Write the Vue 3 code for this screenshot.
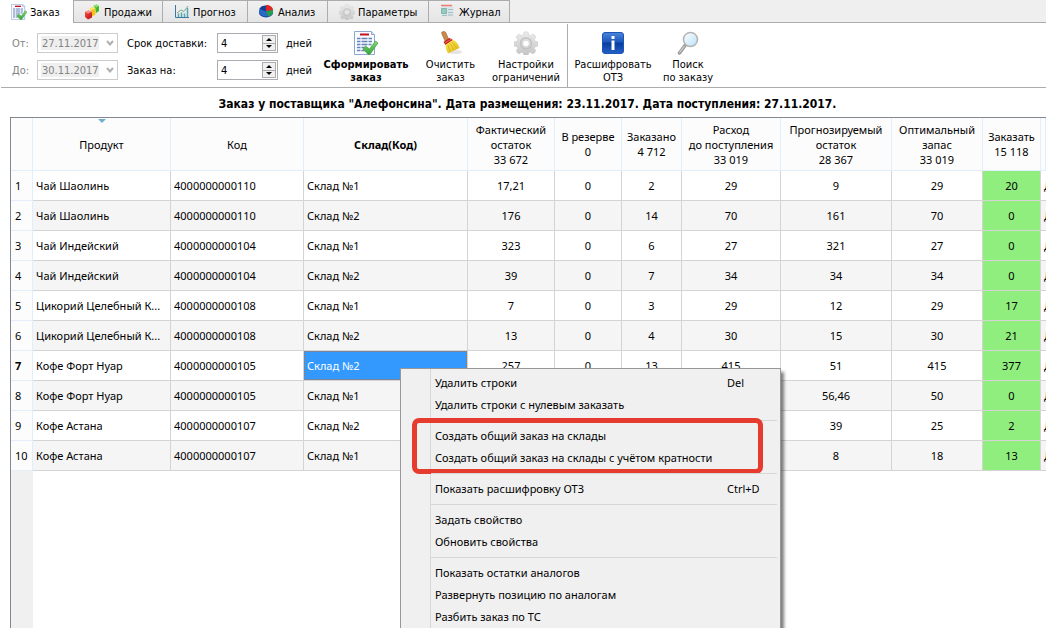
<script setup>
const tabs = [
  { id: 'order', label: 'Заказ', w: 'w1' },
  { id: 'sales', label: 'Продажи', w: 'w2' },
  { id: 'forecast', label: 'Прогноз', w: 'w3' },
  { id: 'analysis', label: 'Анализ', w: 'w4' },
  { id: 'params', label: 'Параметры', w: 'w5' },
  { id: 'journal', label: 'Журнал', w: 'w6' },
]
const columns = [
  { lines: ['Продукт'], sort: true },
  { lines: ['Код'] },
  { lines: ['Склад(Код)'], bold: true },
  { lines: ['Фактический', 'остаток', '33 672'] },
  { lines: ['В резерве', '0'] },
  { lines: ['Заказано', '4 712'] },
  { lines: ['Расход', 'до поступления', '33 019'] },
  { lines: ['Прогнозируемый', 'остаток', '28 367'] },
  { lines: ['Оптимальный', 'запас', '33 019'] },
  { lines: ['Заказать', '15 118'] },
]
const rows = [
  ['Чай Шаолинь', '4000000000110', 'Склад №1', '17,21', '0', '2', '29', '9', '29', '20'],
  ['Чай Шаолинь', '4000000000110', 'Склад №2', '176', '0', '14', '70', '161', '70', '0'],
  ['Чай Индейский', '4000000000104', 'Склад №1', '323', '0', '6', '27', '321', '27', '0'],
  ['Чай Индейский', '4000000000104', 'Склад №2', '39', '0', '7', '34', '34', '34', '0'],
  ['Цикорий Целебный К...', '4000000000108', 'Склад №1', '7', '0', '3', '29', '12', '29', '17'],
  ['Цикорий Целебный К...', '4000000000108', 'Склад №2', '13', '0', '4', '30', '15', '30', '21'],
  ['Кофе Форт Нуар', '4000000000105', 'Склад №2', '257', '0', '13', '415', '51', '415', '377'],
  ['Кофе Форт Нуар', '4000000000105', 'Склад №1', '', '', '', '', '56,46', '50', '0'],
  ['Кофе Астана', '4000000000107', 'Склад №2', '', '', '', '', '39', '25', '2'],
  ['Кофе Астана', '4000000000107', 'Склад №1', '', '', '', '', '8', '18', '13'],
]
const menu = [
  [{ t: 'Удалить строки', k: 'Del' }, { t: 'Удалить строки с нулевым заказать' }],
  [{ t: 'Создать общий заказ на склады' }, { t: 'Создать общий заказ на склады с учётом кратности' }],
  [{ t: 'Показать расшифровку ОТЗ', k: 'Ctrl+D' }],
  [{ t: 'Задать свойство' }, { t: 'Обновить свойства' }],
  [{ t: 'Показать остатки аналогов' }, { t: 'Развернуть позицию по аналогам' }, { t: 'Разбить заказ по ТС' }],
]
</script>

<template>
  <div class="app">
    <svg class="defs" aria-hidden="true">
      <defs>
        <linearGradient id="g-red" x1="0" y1="0" x2="1" y2="1"><stop offset="0" stop-color="#f4524a" /><stop offset="1" stop-color="#b80f10" /></linearGradient>
        <linearGradient id="g-gear" x1="0" y1="0" x2="0" y2="1"><stop offset="0" stop-color="#ececec" /><stop offset="1" stop-color="#c4c4c4" /></linearGradient>
        <linearGradient id="g-blue" x1="0" y1="0" x2="0" y2="1"><stop offset="0" stop-color="#4b86d8" /><stop offset=".45" stop-color="#1d58bd" /><stop offset=".5" stop-color="#073c9f" /><stop offset="1" stop-color="#2560c8" /></linearGradient>
        <linearGradient id="g-straw" x1="0" y1="0" x2="1" y2="1"><stop offset="0" stop-color="#ffee4a" /><stop offset="1" stop-color="#dfb21c" /></linearGradient>
        <linearGradient id="g-glass" x1="0" y1="0" x2="1" y2="1"><stop offset="0" stop-color="#ffffff" /><stop offset="1" stop-color="#b9e0f8" /></linearGradient>
        <linearGradient id="g-check" x1="0" y1="0" x2="0" y2="1"><stop offset="0" stop-color="#86d873" /><stop offset="1" stop-color="#36a43c" /></linearGradient>
        <symbol id="doc" viewBox="0 0 24 24">
          <path d="M.5.5h17l3 3v20H.5z" fill="#f8fbff" stroke="#8ea9d0" />
          <path d="M17.500.5v3h3" fill="#dce8f8" stroke="#8ea9d0" />
          <path d="M6 3.500h9" stroke="#c5101c" stroke-width="2" />
          <path d="M3 7.500h3.500m1 0h6m1 0h3.500M3 10.500h3.500m1 0h6m1 0h3.500M3 13.500h3.500m1 0h6m1 0h3M3 16.500h3.500m1 0h3M3 19.500h3.500m1 0h3" stroke="#6680b8" stroke-width="1.500" />
          <path d="M9 18l2.500-3 4 3 6-8 2.500 2-8 11.300h-2z" fill="url(#g-check)" stroke="#41a245" stroke-width=".7" />
        </symbol>
        <symbol id="gear" viewBox="0 0 24 24">
          <path fill-rule="evenodd" d="M9.800 1.200q2.200-1 4.400 0l.5 2.800 1.700.7 2.400-1.600q2.300.9 3.100 3.100l-1.600 2.400.7 1.700 2.800.5q1 2.200 0 4.400l-2.800.5-.7 1.700 1.600 2.400q-.9 2.300-3.100 3.100l-2.400-1.600-1.700.7-.5 2.300q-2.200.6-4.400 0L9.300 22l-1.700-.7-2.400 1.600q-2.300-.9-3.100-3.100l1.600-2.400-.7-1.700-2.800-.5q-1-2.200 0-4.400l2.800-.5.7-1.700-1.600-2.400q.9-2.300 3.100-3.100l2.400 1.600L9.300 4zM12 9.300a3.200 3.200 0 100 6.400 3.200 3.200 0 000-6.400z" fill="url(#g-gear)" stroke="#c8c8c8" stroke-width=".5" />
          <circle cx="12" cy="12.500" r="5.500" fill="none" stroke="#c2c2c2" stroke-width="1.400" />
        </symbol>
      </defs>
    </svg>

    <nav class="tabs" role="tablist">
      <button v-for="(t, i) in tabs" :key="t.id" type="button" role="tab" :aria-selected="i === 0" :class="['tab', t.w, { active: i === 0 }]">
        <svg class="ticon" viewBox="0 0 16 16" aria-hidden="true">
          <use v-if="t.id === 'order'" href="#doc" width="16" height="16" />
          <g v-else-if="t.id === 'sales'">
            <path d="M0 8l3.500-1.500L7 8v5.500L3 15.500 0 13z" fill="url(#g-red)" />
            <path d="M4.500 4.500L8 3l2.500 1.500v6L7 12.500V8z" fill="#f0c419" /><path d="M4.500 4.500L8 3l2.500 1.500L7 6z" fill="#ffe96a" />
            <path d="M8.500 2l3-1.500L14 2v5l-3 2-.5-4.500z" fill="#44b52f" /><path d="M8.500 2l3-1.500L14 2l-3 1.500z" fill="#8ce371" />
            <path d="M0 8l3.500-1.500L7 8 3 9.500z" fill="#ff8e82" />
          </g>
          <g v-else-if="t.id === 'forecast'" fill="none">
            <path d="M1.500 1v12.500H15" stroke="#3b78a0" /><path d="M4.500 13V9.500M7.500 13V8.500M10.500 13V9.500M13.500 13V4" stroke="#55a9b4" stroke-width="1.500" /><path d="M3 9l4-3 3 1.500L14 2" stroke="#6fae92" />
          </g>
          <g v-else-if="t.id === 'analysis'">
            <ellipse cx="7" cy="8.500" rx="7" ry="5" fill="#103f91" /><ellipse cx="7" cy="7" rx="7" ry="5.500" fill="#2869c9" />
            <path d="M7 7.500L.5 5C1.500 2 5 1 7.500 2z" fill="#163e92" /><path d="M7 7V1c4-.5 6.500 2 7 5z" fill="#e02822" /><path d="M7 7.500L14 6c.5 3-2 6-4.500 6.500z" fill="#24a146" />
          </g>
          <use v-else-if="t.id === 'params'" href="#gear" width="16" height="16" />
          <g v-else>
            <path d="M1.500 1.500h12v11h-12z" fill="#dce5e7" /><path d="M1 1.500h11" stroke="#ef7a76" stroke-width="1.500" /><path d="M1.500 4.500h5v5h-5z" fill="#98cbbd" stroke="#80b5ac" /><path d="M8 5.500h5M8 8.500h5M8 11h5M2 11.500h5" stroke="#a5bcc4" />
          </g>
        </svg>
        <span>{{ t.label }}</span>
      </button>
    </nav>

    <header class="toolbar">
      <form class="fields" @submit.prevent>
        <label class="dim" for="from">От:</label>
        <div class="pick">
          <select id="from" class="date" disabled><option>27.11.2017</option></select>
          <svg class="chev" viewBox="0 0 8 6" aria-hidden="true"><path d="M1 1l3 3.500L7 1" /></svg>
        </div>
        <label for="term">Срок доставки:</label>
        <div class="spin"><input id="term" type="text" value="4"><span class="arrows"><button type="button" aria-label="Больше"><i class="up"></i></button><button type="button" aria-label="Меньше"><i class="down"></i></button></span></div>
        <span>дней</span>
        <label class="dim" for="to">До:</label>
        <div class="pick">
          <select id="to" class="date" disabled><option>30.11.2017</option></select>
          <svg class="chev" viewBox="0 0 8 6" aria-hidden="true"><path d="M1 1l3 3.500L7 1" /></svg>
        </div>
        <label for="span">Заказ на:</label>
        <div class="spin"><input id="span" type="text" value="4"><span class="arrows"><button type="button" aria-label="Больше"><i class="up"></i></button><button type="button" aria-label="Меньше"><i class="down"></i></button></span></div>
        <span>дней</span>
      </form>
      <button type="button" class="tool a1 strong">
        <svg viewBox="0 0 24 24" aria-hidden="true"><use href="#doc" /></svg>
        <span>Сформировать<br>заказ</span>
      </button>
      <button type="button" class="tool a2">
        <svg viewBox="0 0 24 24" aria-hidden="true">
          <ellipse cx="16" cy="21" rx="7" ry="2" fill="#e5e5e5" />
          <path d="M2.500 2Q3 .3 5 .5q1.500.3 2 1.500L9.500 8 6 10z" fill="#c98a4c" stroke="#9a6230" stroke-width=".6" />
          <path d="M4.500 11l6-4 3.500 2-7.500 5z" fill="#c5221f" /><path d="M6.500 14l7.500-5c3 1 5.500 4 6.500 8L9 22.500C7.500 20 6.500 17 6.500 14z" fill="url(#g-straw)" />
          <path d="M9 14l2 7m0-8.500l4 6.500m-2-8l5 6.500" stroke="#cfa51c" stroke-width=".7" /><path d="M6 12l6.500-4" stroke="#ef6a5a" />
        </svg>
        <span>Очистить<br>заказ</span>
      </button>
      <button type="button" class="tool a3"><svg viewBox="0 0 24 24" aria-hidden="true"><use href="#gear" /></svg><span>Настройки<br>ограничений</span></button>
      <div class="divider"></div>
      <button type="button" class="tool a4">
        <svg viewBox="0 0 24 24" aria-hidden="true"><rect x="1.500" y="1.500" width="21" height="21" rx="2.500" fill="url(#g-blue)" stroke="#1c55b5" /><path d="M10.500 5h3v3h-3zm0 4.500h3V19h-3z" fill="#fff" /></svg>
        <span>Расшифровать<br>ОТЗ</span>
      </button>
      <button type="button" class="tool a5">
        <svg viewBox="0 0 24 24" aria-hidden="true"><path d="M9 14.500L3.500 22" stroke="#9b9b9b" stroke-width="3.500" stroke-linecap="round" /><path d="M8.500 15L3.500 21.500" stroke="#d5d5d5" stroke-width="1.200" /><circle cx="14.500" cy="8.500" r="7" fill="url(#g-glass)" stroke="#b5b5b5" stroke-width="1.600" /></svg>
        <span>Поиск<br>по заказу</span>
      </button>
    </header>

    <h1>Заказ у поставщика "Алефонсина". Дата размещения: 23.11.2017. Дата поступления: 27.11.2017.</h1>

    <main class="grid">
      <table>
        <colgroup><col v-for="n in 12" :key="n" :class="'c' + n"></colgroup>
        <thead>
          <tr>
            <th></th>
            <th v-for="c in columns" :key="c.lines[0]" scope="col" :class="{ bold: c.bold }">
              <i v-if="c.sort" class="sort"></i>
              <div v-for="l in c.lines" :key="l">{{ l }}</div>
            </th>
            <th></th>
          </tr>
        </thead>
        <tbody>
          <tr v-for="(r, i) in rows" :key="i">
            <th scope="row" :class="{ bold: i === 6 }">{{ i + 1 }}</th>
            <td v-for="(v, j) in r" :key="j" :class="{ num: j > 2, green: j === 9, sel: i === 6 && j === 2 }">{{ v }}</td>
            <td class="last">Д</td>
          </tr>
        </tbody>
      </table>
      <div class="gutter"></div>
    </main>

    <div class="menu" role="menu">
      <div v-for="(g, i) in menu" :key="i" :class="['group', { marked: i === 1 }]">
        <button v-for="m in g" :key="m.t" type="button" role="menuitem"><span>{{ m.t }}</span><kbd v-if="m.k">{{ m.k }}</kbd></button>
      </div>
    </div>
  </div>
</template>

<style>
html, body, #app { height: 100%; }
body { margin: 0; overflow: hidden; background: #fff; }
</style>

<style scoped>
* { box-sizing: border-box; }
.app { position: relative; height: 100%; overflow: hidden; display: flex; flex-direction: column; font: 11px/13px "DejaVu Sans Condensed", "DejaVu Sans", sans-serif; color: #000; }
.defs { position: absolute; width: 0; height: 0; }
button { font: inherit; color: inherit; background: none; border: 0; padding: 0; margin: 0; }
.tabs { display: flex; flex: none; height: 23px; background: #efefef; align-items: flex-end; border-bottom: 1px solid #acacac; }
.tab { height: 22px; display: flex; align-items: center; gap: 3px; padding: 0 0 0 11px; border: 1px solid #acacac; border-left: 0; border-bottom: 0; background: linear-gradient(#f0f0f0, #e5e5e5); }
.tab span { padding-top: 2px; }
.tab.active { background: #fff; height: 23px; margin-bottom: -1px; border-top: 0; }
.ticon { width: 16px; height: 16px; flex: none; }
.w1 { width: 74px; } .w2 { width: 89px; } .w3 { width: 85px; } .w4 { width: 80px; } .w5 { width: 101px; } .w6 { width: 81px; }
.toolbar { flex: none; height: 65px; display: flex; border-bottom: 1px solid #acacac; margin-left: 1px; }
.fields { display: grid; grid-template-columns: 25px 90px 90px 69px 33px; grid-template-rows: 20px 20px; row-gap: 7px; align-items: center; padding: 10px 0 0 11px; height: 60px; }
.dim { color: #838383; }
.pick { position: relative; width: 81px; height: 20px; }
.date { appearance: none; display: block; width: 100%; height: 20px; border: 1px solid #ccc; background: linear-gradient(#efefef, #efefef) 3px 2px / 58px 14px no-repeat #fff; color: #838383; opacity: 1; font: inherit; padding: 0 0 0 4px; border-radius: 0; }
.chev { position: absolute; right: 4px; top: 7px; width: 8px; height: 6px; fill: none; stroke: #b0b0b0; stroke-width: 2; pointer-events: none; }
.spin { display: flex; width: 61px; height: 20px; border: 1px solid #abadb3; }
.spin input { flex: 1; min-width: 0; border: 0; outline: 0; padding: 0 3px; font: inherit; }
.arrows { width: 15px; display: flex; flex-direction: column; padding: 1px 1px 1px 0; }
.arrows button { flex: 1; display: grid; place-items: center; border: 1px solid #acacac; background: #f0f0f0; }
.arrows button + button { border-top: 0; }
.up, .down { border: 3px solid transparent; width: 0; height: 0; }
.up { border-top: 0; border-bottom-color: #000; }
.down { border-bottom: 0; border-top-color: #000; }
.tool { display: flex; flex-direction: column; align-items: center; padding-top: 8px; gap: 3px; text-align: center; white-space: nowrap; }
.tool svg { width: 24px; height: 24px; flex: none; }
.strong { font-weight: bold; }
.a1 { width: 94px; } .a2 { width: 75px; } .a3 { width: 76px; } .a4 { width: 90px; } .a5 { width: 60px; }
.divider { width: 1px; margin: 1px 0 0 3px; background: #acacac; }
h1 { flex: none; margin: 0; padding-left: 9px; text-align: center; font-size: 12px; line-height: 32px; height: 29px; white-space: nowrap; }
.grid { flex: 1; min-height: 0; margin-left: 10px; border: 1px solid #828790; border-width: 1px 0 0 1px; display: flex; flex-direction: column; font: 11px/15px "Noto Sans", sans-serif; overflow: hidden; }
table { border-collapse: separate; border-spacing: 0; table-layout: fixed; width: 100%; flex: none; }
.c1 { width: 22px; } .c2 { width: 138px; } .c3 { width: 133px; } .c4 { width: 164px; } .c5 { width: 87px; } .c6 { width: 67px; } .c7 { width: 60px; } .c8 { width: 99px; } .c9 { width: 111px; } .c10 { width: 91px; } .c11 { width: 58px; }
th { position: relative; background: #fcfcfc; border-right: 1px solid #e3eefb; border-bottom: 1px solid #e3eefb; font-weight: normal; padding: 0; white-space: nowrap; overflow: hidden; }
thead th { height: 53px; }
tbody th { text-align: left; padding-left: 4px; }
th.bold { font-weight: bold; }
.sort { position: absolute; top: 1px; left: 50%; margin-left: -4px; border: 4px solid transparent; border-top-color: #6eb0cc; border-bottom: 0; }
td { height: 30px; padding: 0 0 0 3px; border-right: 1px solid #d4d4d4; border-bottom: 1px solid #d4d4d4; white-space: nowrap; overflow: hidden; }
tr:nth-child(even) td { background: #f5f5f5; }
.num { text-align: center; padding: 0; }
tbody tr .green.green { background: #90ee7e; }
td.sel { position: relative; background: #3399ff; color: #fff; }
td.sel::after { content: ""; position: absolute; inset: 0; border: 1px dotted #c07030; }
.last { border-right: 0; }
.gutter { flex: 1; width: 22px; background: #f0f0f0; }
.menu { position: absolute; left: 400px; top: 368px; width: 381px; padding: 3px; background: linear-gradient(90deg, transparent 29px, #d7d7d7 29px, #d7d7d7 30px, transparent 30px) #f0f0f0; border: 1px solid #979797; box-shadow: 3px 4px 3px rgba(0, 0, 0, .5); font: 11px/22px "Noto Sans", sans-serif; }
.group { position: relative; }
.group + .group { margin-top: 4px; padding-top: 5px; }
.group + .group::before { content: ""; position: absolute; top: 0; left: 27px; right: 0; height: 1px; background: #d7d7d7; }
.menu button { display: flex; width: 100%; height: 22px; padding-left: 31px; text-align: left; white-space: nowrap; }
.menu span { flex: 1; }
kbd { font: inherit; width: 50px; }
.marked::after { content: ""; position: absolute; left: 8px; right: 14px; top: -2px; bottom: -5px; border: 5px solid #e63c2f; border-radius: 7px; pointer-events: none; }
</style>
